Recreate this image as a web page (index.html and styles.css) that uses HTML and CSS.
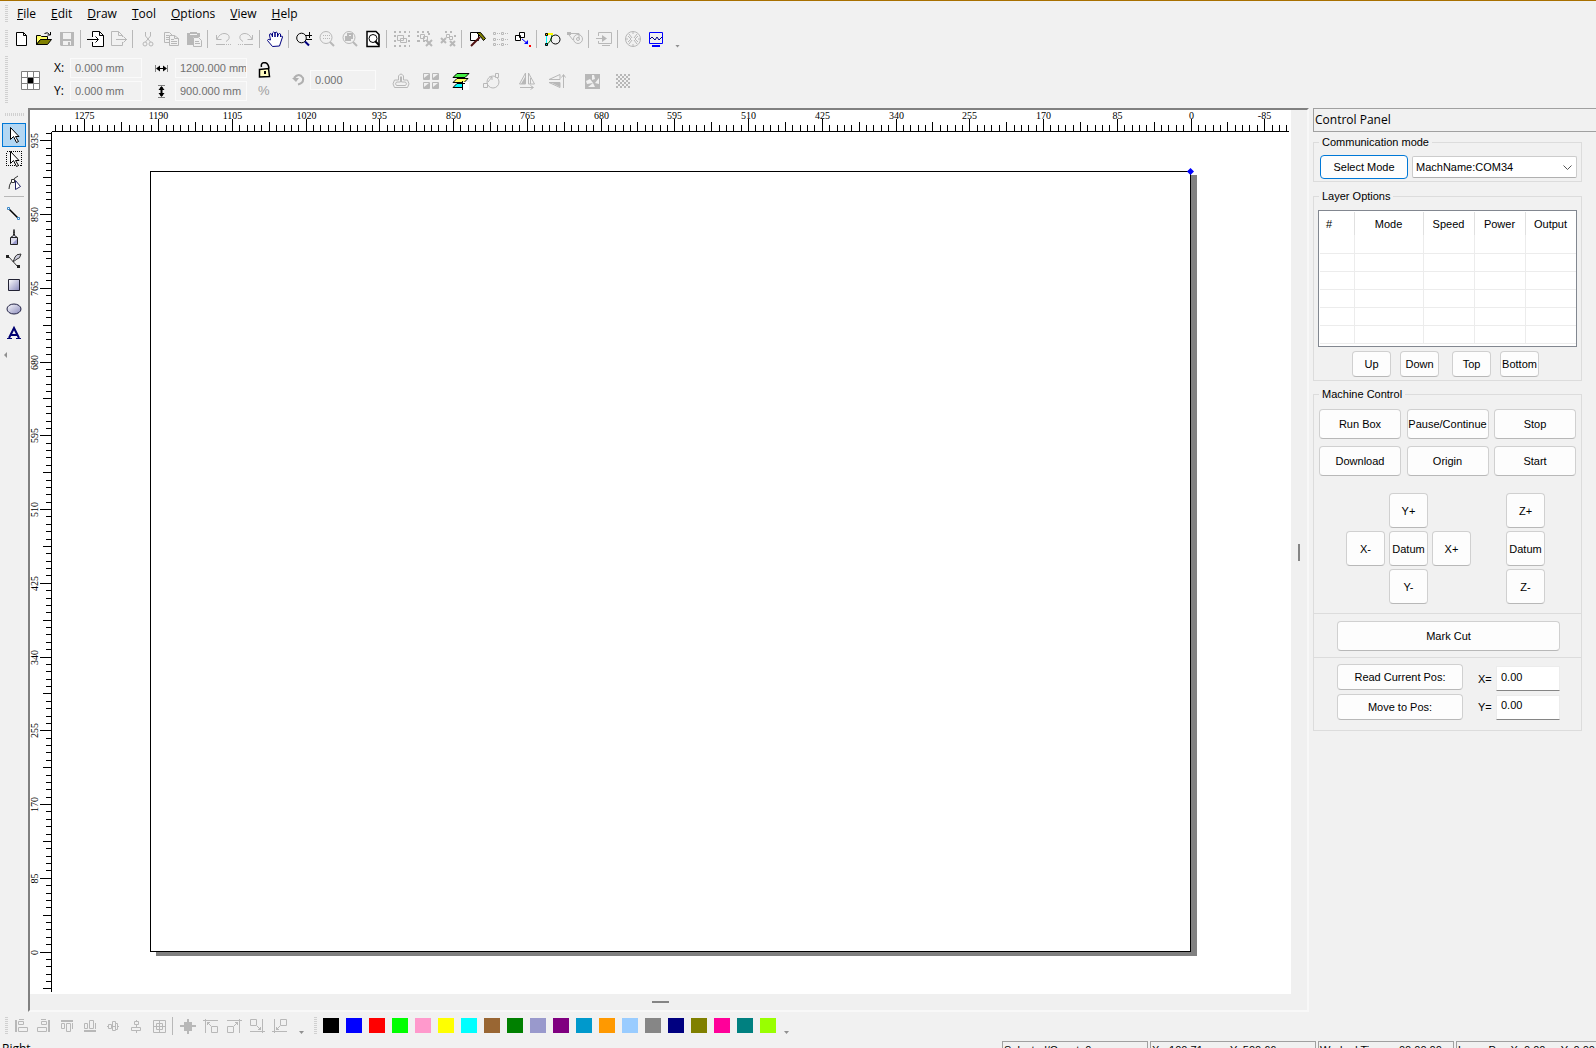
FILE: index.html
```html
<!DOCTYPE html>
<html lang="en">
<head>
<meta charset="utf-8">
<title>Laser Workspace</title>
<link rel="stylesheet" href="styles.css">
</head>
<body>
<div class="app">
<header>
<nav class="menu">
<span class="grip"></span>
<button><u>F</u>ile</button><button><u>E</u>dit</button><button><u>D</u>raw</button><button><u>T</u>ool</button><button><u>O</u>ptions</button><button><u>V</u>iew</button><button><u>H</u>elp</button>
</nav>
<div class="toolbar">
<span class="grip"></span>
<button aria-label="New"><svg viewBox="0 0 18 18"><path class="page" d="M4.500 2.500h7l3 3v10h-10zM11.500 2.500v3h3"/></svg></button>
<button aria-label="Open"><svg viewBox="0 0 18 18"><path fill="#ff6" stroke="#000" d="M1.500 14.500v-9h4l1 1h6v3h-7z"/><path fill="#808000" stroke="#000" d="M1.500 14.500l4-5h11l-4 5z"/><path class="k" d="M9.500 3.500q3-2 5 1M15.500 2v3h-3"/></svg></button>
<button aria-label="Save"><svg viewBox="0 0 18 18"><path class="gf" d="M2 2h14v14H3l-1-1zM5 3v6h8V3zM5 11v4h5v-3h2v3h1v-4z" fill-rule="evenodd"/></svg></button>
<i class="sep"></i>
<button aria-label="Import"><svg viewBox="0 0 18 18"><path class="page" d="M5.500 7V1.500h7l4 4v11h-11V12M12.500 1.500v4h4"/><path class="k" d="M0 9.500h11M8.500 6.500l3 3-3 3"/></svg></button>
<button aria-label="Export"><svg viewBox="0 0 18 18"><path class="g" d="M12.500 7V5.500l-4-4h-7v14h11V12M8.500 1.500v4h4M6 9.500h11M13.500 6.500l3 3-3 3"/></svg></button>
<i class="sep"></i>
<button aria-label="Cut"><svg viewBox="0 0 18 18"><path class="g" d="M6.500 2v4l5 6M11.500 2v4l-5 6"/><circle class="g" cx="6" cy="14" r="2"/><circle class="g" cx="12" cy="14" r="2"/></svg></button>
<button aria-label="Copy"><svg viewBox="0 0 18 18"><path class="g" d="M7 12.500H2.500v-10h5l3 3M4 5.500h3M4 7.500h3M4 9.500h3M7.500 5.500h5l4 3v7h-9zM12.500 5.500v3h4M9 9.500h3M9 11.500h6M9 13.500h6"/></svg></button>
<button aria-label="Paste"><svg viewBox="0 0 18 18"><path class="gf" d="M2 3h3V2h7v1h3v4H8v8H2z"/><path fill="#f1f1f1" stroke="#b8b8b8" d="M8.500 7.500h5l3 3v6h-8z"/><path class="g" d="M10 11.500h4M10 13.500h5"/><path stroke="#f1f1f1" d="M5 4.500h7"/></svg></button>
<i class="sep"></i>
<button aria-label="Undo"><svg viewBox="0 0 18 18"><path class="g" d="M2.500 5v4.500h5M3 9q3-6 8-5.500 5 1 4 5-1 2-3 3M2 14.500h9"/><path class="g dot" d="M12 14.500h5"/></svg></button>
<button aria-label="Redo"><svg viewBox="0 0 18 18"><path class="g" d="M15.500 5v4.500h-5M15 9q-3-6-8-5.500-5 1-4 5 1 2 3 3M7 14.500h9"/><path class="g dot" d="M1 14.500h5"/></svg></button>
<i class="sep"></i>
<button aria-label="Pan"><svg viewBox="0 0 18 18"><path fill="#fff" stroke="#000080" d="M6.500 16.500l-5-6q0-2 3-.5l-1-5q0-2 2-1l1 3V3q1-2 2.500 0v4-4q1-2 2.500 0v4l1-3q1-1 2 0v3l1-1q1 0 1 1l-3 9z"/></svg></button>
<i class="sep"></i>
<button aria-label="Zoom in or out"><svg viewBox="0 0 18 18"><circle class="k" cx="6.500" cy="8" r="4.800"/><path stroke="#000080" stroke-width="2" d="M10 11.500l4 4"/><path class="k" d="M11 5.500h6M14.500 2v6M11 9.500h6"/></svg></button>
<button aria-label="Zoom selection"><svg viewBox="0 0 18 18"><circle class="g" cx="8" cy="7.500" r="6"/><path class="g dot" d="M5 5.500h7M5 8.500h7"/><path stroke="#b8b8b8" stroke-width="2" d="M12 12l4 4"/></svg></button>
<button aria-label="Zoom objects"><svg viewBox="0 0 18 18"><circle class="g" cx="8" cy="7.500" r="6"/><path fill="none" stroke="#b8b8b8" stroke-width="2" d="M7 4h4v4H7zM5 7h4v3H5z"/><path stroke="#b8b8b8" stroke-width="2" d="M12 12l4 4"/></svg></button>
<button aria-label="Zoom page"><svg viewBox="0 0 18 18"><path class="page" stroke-width="1.500" d="M3 1.500h9l3 3v12H3z"/><circle class="k" cx="9" cy="8.500" r="4"/><path stroke="#000" stroke-width="2" d="M11 11l4 4"/></svg></button>
<i class="sep"></i>
<button aria-label="Group"><svg viewBox="0 0 18 18"><path class="g dash" d="M1 2h16M1 16h16M2 5v10M16 5v10"/><path class="g" d="M4.500 5.500h6v5h-6zM7.500 8.500h6v4h-6z"/></svg></button>
<button aria-label="Ungroup"><svg viewBox="0 0 18 18"><path class="g dash" d="M1 2h13M2 5v7M13 3v5M2 11h8"/><path class="g" d="M4.500 4.500h4v4h-4zM7.500 6.500h4v4h-4z"/><path class="x" d="M10 10l6 6M16 10l-6 6"/></svg></button>
<button aria-label="Ungroup all"><svg viewBox="0 0 18 18"><path class="g dash" d="M6 2h10M16 5v5"/><path class="g" d="M7.500 4.500h3v3h-3zM10.500 6.500h3v3h-3z"/><path class="x" d="M2 8l5 5M7 8l-5 5M11 11l5 5M16 11l-5 5"/></svg></button>
<i class="sep"></i>
<button aria-label="Tools"><svg viewBox="0 0 18 18"><path class="page" d="M2.500 2.500h8v8h-8z"/><path stroke="#501010" stroke-width="2" d="M3 16l9-9"/><path fill="#808000" stroke="#000" d="M8.500 2.500h4l5 6-2 2-3-4z"/></svg></button>
<button aria-label="List"><svg viewBox="0 0 18 18"><path class="g" d="M2.500 2.500h2v2h-2zM2.500 8.500h2v2h-2zM2.500 13.500h2v2h-2zM10.500 2.500h2v2h-2zM10.500 8.500h2v2h-2zM10.500 13.500h2v2h-2z"/><path class="g dot" d="M6 3.500h3M6 9.500h3M6 14.500h3M14 3.500h3M14 9.500h3M14 14.500h3"/></svg></button>
<button aria-label="Cut order"><svg viewBox="0 0 18 18"><path class="page" d="M5.500 2.500h5v5h-5zM1.500 5.500h5v5h-5z"/><path stroke="#00f" d="M8 9l6 5"/><path fill="#00f" d="M14 10v4h-4z"/><path fill="red" d="M15 15h2v2h-2z"/></svg></button>
<i class="sep"></i>
<button aria-label="Smooth curve"><svg viewBox="0 0 18 18"><path stroke="#0ff" d="M3.500 5v9"/><path stroke="#ff0" stroke-width="2" d="M4 4h6"/><path stroke="#008000" fill="none" d="M4 14q4-2 5-9"/><circle class="k" cx="12.500" cy="9.500" r="4.500"/><path fill="#fc0" stroke="#000" d="M2.500 3.500h2v2h-2z"/><path fill="#0cc" stroke="#000" d="M2.500 13.500h2v2h-2z"/></svg></button>
<button aria-label="Check curve"><svg viewBox="0 0 18 18"><path class="gf" d="M1 2h4v3H1z"/><path class="g" d="M5 3.500h8v5M3 5l4 5"/><circle class="g" cx="12" cy="9" r="4.500"/><circle class="g" cx="12" cy="9" r="1.500"/></svg></button>
<i class="sep"></i>
<button aria-label="Send to machine"><svg viewBox="0 0 18 18"><path class="g" d="M3.500 6V2.500h13v11h-13V11M7 15.500h8"/><path class="gf" d="M1 8h6V5l5 3.500L7 12V9H1z"/></svg></button>
<i class="sep"></i>
<button aria-label="Array"><svg viewBox="0 0 18 18"><circle class="g" cx="9" cy="9" r="7.500"/><path class="g" d="M9 1v3M9 14v3M1 9h3M14 9h3M5 4l3 4M13 4l-3 4M5 14l3-4M13 14l-3-4M4 6l3 3-3 3M14 6l-3 3 3 3"/></svg></button>
<button aria-label="Preview"><svg viewBox="0 0 18 18"><path fill="none" stroke="#00f" d="M2.500 2.500h13v11h-13z"/><path fill="none" stroke="#000080" d="M3 9l2-2 3 3 2-3 2 3 3-3"/><path stroke="#00f" stroke-width="2" d="M5 16h8"/></svg></button>
<i class="more"></i>
</div>
<div class="props">
<span class="grip"></span>
<svg class="anchor" viewBox="0 0 19 19"><path fill="#fff" stroke="#808080" d="M.5.500h18v18H.5zM6.500 0v19M12.500 0v19M0 6.500h19M0 12.500h19"/><path d="M7 7h5v5H7z"/></svg>
<div class="pairs pos">
<label for="px">X:</label><input id="px" value="0.000 mm" disabled>
<label for="py">Y:</label><input id="py" value="0.000 mm" disabled>
</div>
<div class="pairs size">
<label for="w" aria-label="Width"><svg viewBox="0 0 13 13"><path stroke="#808080" d="M.5 3v7M12.500 3v7"/><path stroke="#000" d="M2 6.500h9"/><path d="M1 6.500l4-3v6zM12 6.500l-4-3v6z"/></svg></label><input id="w" value="1200.000 mm" disabled>
<label for="h" aria-label="Height"><svg viewBox="0 0 13 13"><path stroke="#808080" d="M3 .5h7M3 12.500h7"/><path stroke="#000" stroke-width="2" d="M6.500 2v9"/><path d="M6.500 1l-3 4h6zM6.500 12l-3-4h6z"/></svg></label><input id="h" value="900.000 mm" disabled>
</div>
<div class="lock">
<svg viewBox="0 0 13 16"><path class="k" stroke-width="1.500" d="M3.500 5q-1-4 3-4.500 4 .5 4.500 6"/><path fill="#fffbc0" stroke="#000" stroke-width="1.500" d="M1.500 7.500l9-1 1 8-10 .5z"/><path d="M6 9h2v3H6z"/></svg>
<span>%</span>
</div>
<svg class="rot" viewBox="0 0 13 13"><path fill="none" stroke="#b0b0b0" stroke-width="2" d="M2 5q5-6 9 0 1 5-5 6.500"/><path fill="#b0b0b0" d="M0 5h7L4 9z"/></svg>
<input class="angle" aria-label="Rotation" value="0.000" disabled>
<div class="modes">
<svg viewBox="0 0 18 18"><path class="g" d="M6.500 8V4q2.500-4 5 0v4h4q3 4 0 7.500h-13q-3-3.500 0-7.500zM8.500 10V5q.5-1 1 0v5h4q2 2 0 3.500h-9q-2-1.500 0-3.500z"/></svg>
<svg viewBox="0 0 18 18"><path class="g" d="M1.500 1.500h6v6h-6zM10.500 1.500h6v6h-6zM1.500 10.500h6v6h-6zM10.500 10.500h6v6h-6z"/><path class="gf" d="M2 7V6l5-4v5zM11 7V6l5-4v5zM2 16v-1l5-4v5zM11 16v-1l5-4v5z"/></svg>
<svg viewBox="0 0 18 18"><path fill="#0ff" stroke="#000" d="M1 15.500l4-4h11l-4 4z"/><path fill="#ff6" stroke="#000" d="M1 10.500l4-4h11l-4 4z"/><path fill="#4e4" stroke="#000" d="M1 5.500l4-4h12l-4 4z"/><path fill="#fff" d="M11 10h6v8h-6z"/><path stroke="#000" d="M10.500 9v9M9 11.500h4"/></svg>
<svg viewBox="0 0 18 18"><circle class="g" cx="11" cy="10" r="6"/><path fill="#f1f1f1" stroke="#b8b8b8" d="M1.500 11.500h4v4h-4zM13.500 1.500h3v4h-3zM6 10l4-5M7 5h3v3"/></svg>
<svg class="apart" viewBox="0 0 18 18"><path class="g" d="M7.500 1v11h-6zM10.500 1v11h6zM2 15.500h13M12.500 13.500l3 2-3 2M12.500 6v6"/><path class="gf" d="M7 5v7H3z"/></svg>
<svg viewBox="0 0 18 18"><path class="g" d="M12 7.500H1l11-5zM12 10.500H1l11 5zM15.500 16V3M13.500 5.500l2-3 2 3"/><path class="gf" d="M12 11v4l-8-4z"/></svg>
<svg class="apart" viewBox="0 0 18 18"><path class="gf" d="M1 2h15v15H1z"/><path fill="#f1f1f1" d="M8 3h2l1 4-3 1zM2 9l4-2 3 4-6 1zM11 11l4-5v6zM4 15l5-4 2 4z"/></svg>
<svg viewBox="0 0 18 18"><path class="check" d="M2 3h14M2 7h14M2 11h14M2 15h14"/><path class="check" stroke-dashoffset="2" d="M2 5h14M2 9h14M2 13h14"/></svg>
</div>
</div>
</header>
<main>
<aside class="tools">
<span class="grip flat"></span>
<button class="on" aria-label="Select"><svg viewBox="0 0 18 18"><path fill="#fff" stroke="#000" d="M5.500 1.500v12l3-3 3 6 2-1-3-5h3.500z"/></svg></button>
<button aria-label="Box select"><svg viewBox="0 0 18 18"><path class="k dot" d="M1.500 1.500h15v14h-15z"/><path fill="#fff" stroke="#000" d="M5.500 1.500v12l3-3 3 6 2-1-3-5h3.500z"/></svg></button>
<button aria-label="Edit nodes"><svg viewBox="0 0 18 18"><path fill="none" stroke="#333" d="M4 15q0-8 9-13"/><path fill="#fff" stroke="#333" d="M6.500 5.500h3v3h-3z"/><path fill="#fff" stroke="#226" d="M10.500 6.500v9l5-3z"/></svg></button>
<hr>
<button aria-label="Line"><svg viewBox="0 0 18 18"><path stroke="#000" stroke-width="1.500" d="M4 5l9 9"/><path fill="#fff" stroke="#3a87c8" d="M2.500 3.500h2v2h-2zM12.500 13.500h2v2h-2z"/></svg></button>
<button aria-label="Pen"><svg viewBox="0 0 18 18"><path fill="#dde" stroke="#222" d="M5.500 16.500v-7l3-2v-2l.5-4 .5 4v2l3 2v7zM6 9.500h6"/><path fill="#99c" d="M7 16l5-5v5z"/></svg></button>
<button aria-label="Curve"><svg viewBox="0 0 18 18"><path fill="none" stroke="#333" d="M3 4l10 11"/><path fill="#ccd" stroke="#333" d="M8 10l2-5q1-3 6-3-1 5-4 5z"/><path fill="#222" d="M1 3h3v3H1zM12 13h3v3h-3z"/></svg></button>
<button aria-label="Rectangle"><svg viewBox="0 0 18 18"><defs><linearGradient id="lav" x2="1" y2="1"><stop stop-color="#fff"/><stop offset="1" stop-color="#88b"/></linearGradient></defs><path fill="url(#lav)" stroke="#223" d="M3.500 3.500h11v11h-11z"/></svg></button>
<button aria-label="Ellipse"><svg viewBox="0 0 18 18"><ellipse cx="9" cy="9" rx="7" ry="5" fill="url(#lav)" stroke="#224"/></svg></button>
<button aria-label="Text"><svg viewBox="0 0 18 18"><path fill="none" stroke="#000070" stroke-width="2" d="M4 14l5-10 5 10M6 11h6"/><path stroke="#000070" d="M2 14.500h5M11 14.500h5"/></svg></button>
<i class="back"></i>
</aside>
<section class="frame">
<div class="view">
<svg class="ruler top" id="hr"></svg>
<svg class="ruler side" id="vr"></svg>
<div class="stage"><div class="sheet" id="sheet"><i class="origin"></i></div></div>
</div>
<div class="vbar"><i></i></div>
<div class="hbar"><i></i></div>
</section>
<aside class="panel">
<h2>Control Panel</h2>
<fieldset class="comm"><legend>Communication mode</legend>
<button class="btn focus">Select Mode</button>
<span class="pick"><select aria-label="Machine"><option>MachName:COM34</option></select><svg viewBox="0 0 9 5"><path fill="none" stroke="#555" d="M.5.500l4 4 4-4"/></svg></span>
</fieldset>
<fieldset class="layers"><legend>Layer Options</legend>
<div class="list"><table>
<thead><tr><th>#</th><th>Mode</th><th>Speed</th><th>Power</th><th>Output</th></tr></thead>
<tbody><tr><td></td><td></td><td></td><td></td><td></td></tr><tr><td></td><td></td><td></td><td></td><td></td></tr><tr><td></td><td></td><td></td><td></td><td></td></tr><tr><td></td><td></td><td></td><td></td><td></td></tr><tr><td></td><td></td><td></td><td></td><td></td></tr><tr><td></td><td></td><td></td><td></td><td></td></tr></tbody>
</table></div>
<div class="order"><button class="btn">Up</button><button class="btn">Down</button><button class="btn">Top</button><button class="btn">Bottom</button></div>
</fieldset>
<fieldset class="machine"><legend>Machine Control</legend>
<div class="runs"><button class="btn">Run Box</button><button class="btn">Pause/Continue</button><button class="btn">Stop</button><button class="btn">Download</button><button class="btn">Origin</button><button class="btn">Start</button></div>
<div class="jog">
<div class="xy"><button class="btn yp">Y+</button><button class="btn xm">X-</button><button class="btn">Datum</button><button class="btn">X+</button><button class="btn ym">Y-</button></div>
<div class="z"><button class="btn">Z+</button><button class="btn">Datum</button><button class="btn">Z-</button></div>
</div>
<div class="mark"><button class="btn">Mark Cut</button></div>
<div class="coords">
<div class="acts"><button class="btn">Read Current Pos:</button><button class="btn">Move to Pos:</button></div>
<div class="vals"><label for="cx">X=</label><input id="cx" value="0.00"><label for="cy">Y=</label><input id="cy" value="0.00"></div>
</div>
</fieldset>
</aside>
</main>
<footer>
<div class="bottom">
<span class="grip"></span>
<button aria-label="Align left"><svg viewBox="0 0 18 18"><path stroke="#b8b8b8" stroke-width="2" d="M4 3v12"/><path class="g" d="M6.500 4.500h5v3h-5zM6.500 10.500h9v4h-9zM7 2.500h5"/></svg></button>
<button aria-label="Align right"><svg viewBox="0 0 18 18"><path stroke="#b8b8b8" stroke-width="2" d="M14 3v12"/><path class="g" d="M6.500 4.500h5v3h-5zM2.500 10.500h9v4h-9zM6 2.500h5"/></svg></button>
<button aria-label="Align top"><svg viewBox="0 0 18 18"><path stroke="#b8b8b8" stroke-width="2" d="M3 4h12"/><path class="g" d="M3.500 6.500h3v5h-3zM8.500 6.500h4v8h-4zM14.500 6v6"/></svg></button>
<button aria-label="Align bottom"><svg viewBox="0 0 18 18"><path stroke="#b8b8b8" stroke-width="2" d="M3 14h12"/><path class="g" d="M3.500 6.500h3v5h-3zM8.500 3.500h4v8h-4zM14.500 6v6"/></svg></button>
<button aria-label="Center vertically"><svg viewBox="0 0 18 18"><path class="g" d="M3 9.500h12M8.500 4.500h3v9h-3z"/><path fill="#f1f1f1" stroke="#b8b8b8" d="M4.500 7.500h3v4h-3zM11.500 6.500h2v6h-2z"/></svg></button>
<button aria-label="Center horizontally"><svg viewBox="0 0 18 18"><path class="g" d="M9.500 3v13"/><path fill="#f1f1f1" stroke="#b8b8b8" d="M7.500 4.500h4v3h-4zM4.500 10.500h9v3h-9z"/></svg></button>
<button aria-label="Center on page"><svg viewBox="0 0 18 18"><path class="g" d="M3.500 3.500h12v12h-12zM9.500 3v13M3 9.500h13M6.500 6.500h6v6h-6z"/></svg></button>
<i class="sep"></i>
<button aria-label="Move to center"><svg viewBox="0 0 18 18"><path class="gf" d="M5 5h3V2h2v3h3v3h4v2h-4v4h-3v3H8v-3H5v-4H1V8h4z"/></svg></button>
<button aria-label="To top left"><svg viewBox="0 0 18 18"><path class="g" d="M1 3.500h15M3.500 2v14M9.500 9.500h6v6h-6zM9 9L5 5M5.500 8V5.500H8"/></svg></button>
<button aria-label="To top right"><svg viewBox="0 0 18 18"><path class="g" d="M2 3.500h15M14.500 2v14M2.500 9.500h6v6h-6zM9 9l4-4M10 5.500h2.500V8"/></svg></button>
<button aria-label="To bottom right"><svg viewBox="0 0 18 18"><path class="g" d="M2 14.500h15M14.500 2v14M2.500 2.500h6v6h-6zM9 9l4 4M10 12.500h2.500V10"/></svg></button>
<button aria-label="To bottom left"><svg viewBox="0 0 18 18"><path class="g" d="M1 14.500h15M3.500 2v14M9.500 2.500h6v6h-6zM9 9l-4 4M5.500 10v2.500H8"/></svg></button>
<i class="more"></i>
<span class="grip second"></span>
<div class="swatches" id="swatches"></div>
<i class="more end"></i>
</div>
<div class="status">
<span class="msg">Right</span>
<span class="cell c1">Selected/Count: 0</span>
<span class="cell c2"><b>X: -100.71</b><b>Y: 500.66</b></span>
<span class="cell c3"><b>Worked Time:</b><b>00:00:00</b></span>
<span class="cell c4"><b>Laser Pos:X: 0.00</b><b>Y: 0.00</b></span>
</div>
</footer>
</div>
<script src="app.js"></script>
</body>
</html>
```
FILE: styles.css
```css
* { box-sizing: border-box; }
body { margin: 0; height: 100vh; overflow: hidden; background: #f1f1f1; font: 11px/14px "Liberation Sans", Arial, sans-serif; color: #000; }
button, input, select { font: inherit; color: inherit; margin: 0; padding: 0; border: 0; background: none; }
svg { display: block; flex: none; }
/* the status bar runs past the lower edge of the window */
.app { display: flex; flex-direction: column; height: calc(100vh + 14px); border-top: 1px solid #a87000; }
header, footer { flex: none; }

.k { fill: none; stroke: #000; }
.g { fill: none; stroke: #b8b8b8; }
.gf { fill: #b8b8b8; }
.page { fill: #fff; stroke: #000; }
.x { fill: none; stroke: #b8b8b8; stroke-width: 2; }
.dot { stroke-dasharray: 1 1; shape-rendering: crispEdges; }
.dash { stroke-width: 2; stroke-dasharray: 2 3; }
.check { stroke: #b8b8b8; stroke-width: 2; stroke-dasharray: 2 2; }

.grip { display: block; flex: none; width: 3px; height: 18px; margin-left: 5px; background: repeating-linear-gradient(#d0d0d0 0 1px, transparent 1px 2px); }
.grip.flat { width: 20px; height: 3px; margin: 0 0 7px 3px; background: repeating-linear-gradient(90deg, #d0d0d0 0 1px, transparent 1px 2px); }
.menu { display: flex; align-items: center; height: 25px; gap: 15px; font: 12px/16px "Open Sans", sans-serif; }
.menu .grip { margin-right: -6px; }
.toolbar, .bottom { display: flex; align-items: center; height: 26px; }
.toolbar .grip, .bottom .grip { margin-right: 1px; }
.toolbar button, .bottom button { display: grid; place-items: center; width: 23px; height: 24px; }
.toolbar svg, .bottom svg, .tools svg { width: 18px; height: 18px; }
.sep { width: 1px; height: 18px; margin: 0 3px 0 2px; background: #b8b8b8; }
.more { width: 5px; height: 3px; margin: 14px 0 0 8px; background: #909090; clip-path: polygon(0 0, 100% 0, 50% 100%); }

.props { display: flex; align-items: center; height: 55px; }
.props .grip { height: 48px; }
.props input { width: 72px; height: 20px; padding-left: 4px; border: 1px solid #fafafa; color: #707070; }
.anchor { width: 19px; height: 19px; margin: 2px 14px 0 13px; }
.pairs { display: grid; row-gap: 3px; align-items: center; }
.pos { grid-template-columns: 16px 72px; }
.pos label { font: 12px/16px "Open Sans", sans-serif; }
.size { grid-template-columns: 20px 72px; margin-left: 13px; }
.size svg, .rot { width: 13px; height: 13px; }
.lock { width: 15px; margin-left: 11px; color: #a0a0a0; font-size: 13px; display: grid; row-gap: 6px; }
.lock svg { width: 13px; height: 16px; }
.rot { margin-left: 19px; }
.props .angle { width: 66px; margin-left: 5px; }
.modes { display: flex; gap: 12px; margin: 2px 0 0 16px; }
.modes svg { width: 18px; height: 18px; }
.modes .apart { margin-left: 6px; }

main { flex: 1; min-height: 0; display: flex; padding-top: 1px; }
.tools { flex: none; width: 28px; padding: 5px 2px 0; }
.tools button { display: grid; place-items: center; width: 24px; height: 24px; }
.tools .on { background: #b3d7f3; border: 1px solid #0078d7; }
.tools hr { width: 20px; height: 1px; margin: 1px 2px 4px; border: 0; background: #b8b8b8; }
.back { display: block; width: 3px; height: 6px; margin: 7px 2px; background: #909090; clip-path: polygon(100% 0, 100% 100%, 0 50%); }

.frame { flex: 1; min-width: 0; display: grid; grid-template: 1fr 16px / 1fr 16px; border: 2px solid; border-color: #808080 #f8f8f8 #f8f8f8 #808080; background: #f0f0f0; }
.view { display: grid; grid-template: 22px 1fr / 22px 1fr; background: #fff; min-width: 0; min-height: 0; }
.ruler { width: 100%; height: 100%; font: 10px "Liberation Serif", serif; shape-rendering: crispEdges; }
.ruler path { fill: none; stroke: #000; }
.ruler.top { grid-column: 1 / 3; }
.ruler text { text-anchor: middle; }
.stage { padding: 39px 100px 42px 98px; }
.sheet { position: relative; height: 100%; border: 1px solid #000; box-shadow: 6px 4px 0 #808080; background: #fff; }
.origin { position: absolute; top: -4px; right: -4px; width: 7px; height: 7px; background: #00f; clip-path: polygon(50% 0, 100% 50%, 50% 100%, 0 50%); }
.vbar, .hbar { display: grid; place-items: center; }
.vbar i { width: 2px; height: 17px; background: #858585; }
.hbar i { width: 17px; height: 2px; background: #858585; }

.panel { flex: none; width: 287px; padding-left: 4px; }
.panel h2 { height: 24px; margin: 0; padding-left: 1px; border: 1px solid #a0a0a0; border-right: 0; font: 12px/22px "Open Sans", sans-serif; }
fieldset { width: 269px; min-width: 0; margin: 0; border: 1px solid #dcdcdc; padding: 0 4px; }
legend { margin-left: 1px; padding: 0 3px; height: 14px; }
.btn { background: #fdfdfd; border: 1px solid #d0d0d0; border-bottom-color: #b8b8b8; border-radius: 4px; white-space: nowrap; }
.btn.focus { border-color: #0078d7; }
.comm { display: flex; gap: 4px; height: 47px; margin-top: 3px; padding: 6px 4px 0 6px; }
.comm legend { margin-left: -1px; }
.comm .btn { width: 88px; height: 24px; }
.pick { display: inline-grid; flex: 1; height: 22px; margin-top: 1px; align-items: center; background: #fff; border: 1px solid #ccc; border-bottom-color: #b0b0b0; border-radius: 2px; }
.pick select, .pick svg { grid-area: 1 / 1; }
.pick select { appearance: none; width: 100%; height: 20px; padding-left: 3px; }
.pick svg { width: 9px; height: 5px; justify-self: end; margin-right: 4px; pointer-events: none; }
.layers { height: 192px; margin-top: 7px; }
.list { height: 137px; margin-top: 7px; padding: 1px; background: #fff; border: 1px solid #828790; overflow: hidden; }
table { width: 100%; border-collapse: collapse; table-layout: fixed; }
th { height: 23px; padding: 0; font-weight: normal; border-right: 1px solid #e0e0e0; }
th:first-child { width: 34px; text-align: left; padding-left: 6px; }
th:nth-child(2) { width: 69px; }
th:nth-child(3), th:nth-child(4), th:nth-child(5) { width: 51px; }
td { height: 18px; padding: 0; border: solid #ececec; border-width: 0 1px 1px 0; }
.order { display: flex; gap: 9px; margin: 4px 0 0 34px; }
.order .btn { width: 39px; height: 26px; }
.order .btn:nth-child(3) { margin-left: 4px; }
.machine { height: 344px; margin-top: 6px; padding: 0; }
.machine legend { margin-left: 5px; }
.runs { display: grid; grid-template-columns: repeat(3, 82px); justify-content: space-between; gap: 7px 0; margin: 8px 5px 0; }
.runs .btn { height: 30px; }
.jog { display: flex; justify-content: space-between; margin-top: 17px; padding: 0 36px 9px 32px; border-bottom: 1px solid #dcdcdc; }
.xy { display: grid; grid-template: repeat(3, 35px) / repeat(3, 39px); gap: 3px 4px; }
.yp, .ym { grid-column: 2; }
.xm { grid-column: 1; }
.z { display: grid; grid-template: repeat(3, 35px) / 39px; gap: 3px; }
.mark { padding: 7px 21px 6px 23px; border-bottom: 1px solid #dcdcdc; }
.mark .btn { width: 100%; height: 30px; }
.coords { display: flex; justify-content: space-between; padding: 6px 21px 0 23px; }
.acts { display: grid; gap: 4px; width: 126px; }
.acts .btn { height: 26px; }
.vals { display: grid; grid-template-columns: 18px 64px; gap: 3px 0; align-items: center; margin-top: 2px; }
.vals input { width: 64px; height: 25px; padding: 0 0 4px 4px; background: #fff; border: 1px solid #ececec; border-bottom-color: #858585; }

.bottom { height: 27px; }
.bottom .grip.second { margin: 0 6px 0 10px; }
.swatches { display: flex; gap: 7px; }
.swatches button { width: 16px; height: 15px; }
.status { display: flex; height: 23px; padding-top: 2px; gap: 2px; }
.msg { flex: 1; padding: 0 2px; font: 12px/16px "Open Sans", sans-serif; }
.cell { display: flex; height: 20px; padding: 1px; border: 1px solid #a0a0a0; white-space: nowrap; }
.cell b { font-weight: normal; }
.c1 { width: 146px; }
.c2 { width: 166px; }
.c3 { width: 136px; }
.c4 { width: 140px; border-right: 0; }
.c2 b:first-child { width: 78px; }
.c3 b:first-child { width: 79px; }
.c4 b:first-child { width: 113px; }
```
FILE: app.js
```js
const colors = ['#000', '#00f', '#f00', '#0f0', '#f9c', '#ff0', '#0ff', '#963', '#008000', '#99c',
  '#800080', '#09c', '#f90', '#9cf', '#868686', '#000080', '#808000', '#f09', '#008080', '#9f0'];
const bar = document.getElementById('swatches');
for (const c of colors) {
  const b = document.createElement('button');
  b.style.background = c;
  b.setAttribute('aria-label', 'Color ' + c);
  bar.append(b);
}

// Rulers: a small tick each 8.5 mm, a label each 85 mm; the bed is 1200 mm wide.
const sheet = document.getElementById('sheet');
const hr = document.getElementById('hr');
const vr = document.getElementById('vr');
function drawRulers() {
  const s = sheet.getBoundingClientRect();
  const h = hr.getBoundingClientRect();
  const v = vr.getBoundingClientRect();
  const step = s.width / 1200 * 8.5;
  const len = n => n % 10 === 0 ? 12 : n % 5 === 0 ? 9 : 6;
  let path = `M22 21.5H${h.width - 2}`;
  let text = '';
  const ox = s.right - h.left;
  for (let n = Math.ceil((ox - h.width + 2) / step); ox - n * step > 24; n++) {
    const x = Math.floor(ox - n * step) + 0.5;
    path += `M${x} 21V${21 - len(n)}`;
    if (n % 10 === 0) text += `<text x="${x}" y="9">${n * 8.5}</text>`;
  }
  hr.innerHTML = `<path d="${path}"/>${text}`;
  path = `M21.5 0V${v.height - 2}`;
  text = '';
  const oy = s.bottom - v.top;
  for (let n = Math.ceil((oy - v.height + 2) / step); oy - n * step > 0; n++) {
    const y = Math.floor(oy - n * step) + 0.5;
    path += `M21 ${y}H${22 - len(n)}`;
    if (n % 10 === 0) text += `<text transform="translate(8 ${y}) rotate(-90)">${n * 8.5}</text>`;
  }
  vr.innerHTML = `<path d="${path}"/>${text}`;
}
drawRulers();
addEventListener('resize', drawRulers);
```
